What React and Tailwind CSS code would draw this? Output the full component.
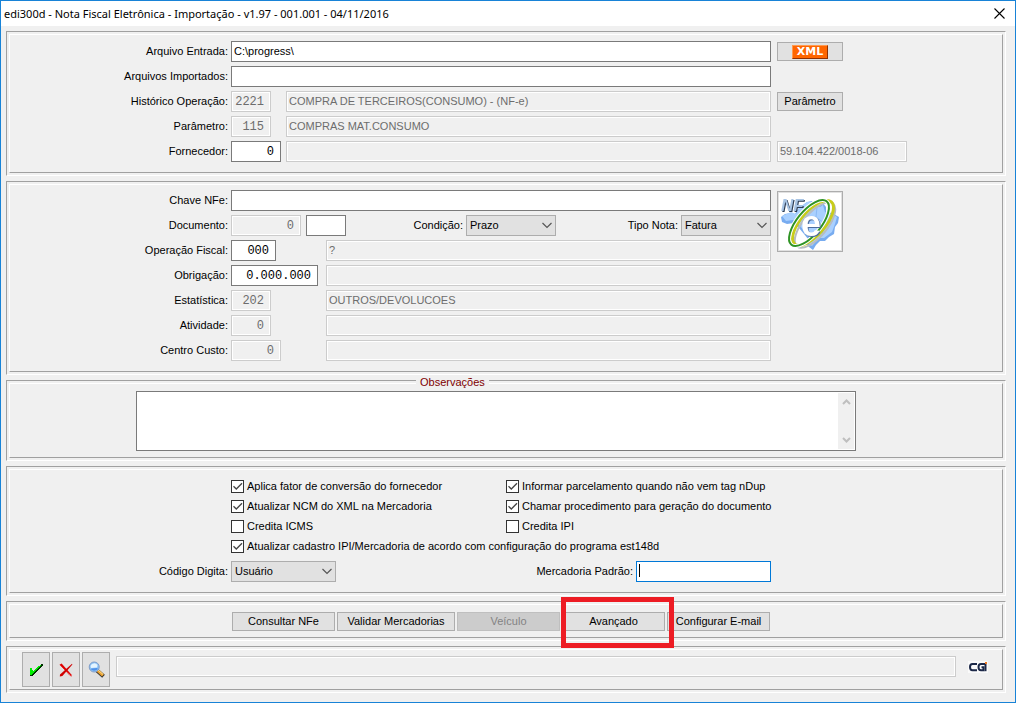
import { useState } from 'react';
import clsx from 'clsx';

// ── Small building blocks ────────────────────────────────────────────────────

// Double bevelled group frame: sunken line outside, raised line inside
function Panel({ className, children }) {
  return (
    <section className="relative border border-t-[#a0a0a0] border-l-[#a0a0a0] border-r-white border-b-white p-[2px]">
      <div className={clsx('border border-t-white border-l-white border-r-[#a0a0a0] border-b-[#a0a0a0]', className)}>
        {children}
      </div>
    </section>
  );
}

function Field({ mono, right, className, disabled, ...props }) {
  return (
    <input
      type="text"
      disabled={disabled}
      className={clsx(
        'h-[21px] min-w-0 border px-[2px] outline-none',
        mono ? 'font-["Liberation_Mono",monospace] text-[12px]' : 'pb-[1px]',
        right && 'pr-[6px] text-right',
        disabled
          ? 'border-[#cccccc] bg-[#f0f0f0] text-[#6d6d6d] shadow-[inset_0_0_0_1px_#ffffff]'
          : 'border-[#7a7a7a] bg-white text-black focus:border-[#0078d7]',
        className,
      )}
      {...props}
    />
  );
}

function Select({ id, className, options }) {
  return (
    <div className={clsx('relative', className)}>
      <select id={id} className="h-[21px] w-full appearance-none border border-[#adadad] bg-[#e1e1e1] px-[3px] text-black outline-none">
        {options.map((o) => <option key={o}>{o}</option>)}
      </select>
      <svg className="pointer-events-none absolute top-[7px] right-[4px] h-[7px] w-[10px]" viewBox="0 0 10 7" fill="none" stroke="#555555" strokeWidth="1.2">
        <path d="M0.5 1 L5 5.5 L9.5 1" />
      </svg>
    </div>
  );
}

function Row({ id, label, children }) {
  return (
    <div className="flex h-[21px] items-center">
      <label htmlFor={id} className="w-[221px] shrink-0 pr-[3px] text-right">{label}</label>
      <div className="flex min-w-0 flex-1">{children}</div>
    </div>
  );
}

function Check({ id, label, defaultChecked, className }) {
  const [checked, setChecked] = useState(!!defaultChecked);
  return (
    <div className={clsx('flex h-[20px] items-center', className)}>
      <span className="relative block size-[13px] shrink-0">
        <input
          id={id}
          type="checkbox"
          checked={checked}
          onChange={(e) => setChecked(e.target.checked)}
          className="block size-[13px] appearance-none border border-[#333333] bg-white"
        />
        {checked && (
          <svg className="pointer-events-none absolute inset-0 size-[13px]" viewBox="0 0 13 13" fill="none" stroke="#444444" strokeWidth="1.3">
            <path d="M2.5 6.2 L5.3 9 L11 3.2" />
          </svg>
        )}
      </span>
      <label htmlFor={id} className="pl-[3px] whitespace-nowrap">{label}</label>
    </div>
  );
}

function Button({ className, children, ...props }) {
  return (
    <button
      type="button"
      className={clsx(
        'flex items-center justify-center border border-[#adadad] bg-[#e1e1e1] whitespace-nowrap text-black disabled:border-[#bfbfbf] disabled:bg-[#cccccc] disabled:text-[#838383]',
        className,
      )}
      {...props}
    >
      {children}
    </button>
  );
}

// ── Icons ────────────────────────────────────────────────────────────────────

function ConfirmIcon() {
  return (
    <svg className="h-[14px] w-[14px]" viewBox="0 0 14 14" shapeRendering="crispEdges">
      <path d="M0.5 6 L3 6 L4 9 L12 1.5 L14 1 L14 2 L4.5 12.5 L1 13 L0.5 12 Z" fill="#003000" />
      <path d="M1 5 L3 5 L4 8.5 L10 3 L13.5 1 L4 11 L1.5 12 Z" fill="#00f000" />
    </svg>
  );
}

function CancelIcon() {
  return (
    <svg className="h-[14px] w-[14px]" viewBox="0 0 14 14" fill="none">
      <path d="M2 2.5 L11 12.5 L13 13" stroke="#f04040" strokeWidth="1" />
      <path d="M0.5 1.8 L2.6 0.6 L12.8 12 L11.8 12.5 Z" fill="#e00000" />
      <path d="M13 0.8 L13.4 1.6 L3.4 13 L0.8 13.4 L1 11.6 Z" fill="#d00000" />
    </svg>
  );
}

function SearchIcon() {
  return (
    <svg className="h-[17px] w-[17px]" viewBox="0 0 17 17" fill="none">
      <path d="M9 9.5 L15.5 15.2" stroke="#303030" strokeWidth="4" />
      <path d="M9 9 L15 14.4" stroke="#e8a030" strokeWidth="3" />
      <path d="M9.5 8.5 L15 13.4" stroke="#ffe090" strokeWidth="1" />
      <circle cx="6.2" cy="6" r="5" fill="#8cc4f8" stroke="#7f9cc8" strokeWidth="1" />
      <path d="M2.5 5 A4 4 0 0 1 9.5 4 L9 6.5 L3 7 Z" fill="#e4f4ff" />
      <path d="M2.5 8 Q6 11.5 10 8 L9 7 L4 7.5 Z" fill="#4f90e8" />
    </svg>
  );
}

function NfeLogo() {
  return (
    <svg className="h-[57px] w-[62px]" viewBox="0 0 62 57" fill="none">
      <rect width="62" height="57" fill="#ffffff" />
      <path
        d="M2 24 L6 21 L12 20 L16 21 L19 16 L24 12 L28 9 L33 8 L36 12 L40 13 L44 10 L47 14 L47 19 L53 20 L60 24 L59 30 L56 34 L55 41 L50 44 L46 48 L41 48 L37 52 L34 57 L30 54 L27 50 L29 46 L25 41 L20 35 L15 30 L8 31 L3 29 Z"
        fill="#78acf0"
      />
      <path
        d="M3 23 L12 19 L17 21 L20 15 L28 9 L33 9 L36 13 L41 14 L44 12 L46 19 L53 21 L58 24 L56 31 L53 39 L45 45 L40 45 L33 53 L29 50 L31 45 L26 39 L21 33 L14 27 L7 28 Z"
        fill="#a9d0ff"
      />
      <path d="M38 14 L37 24 L45 30 L54 28 M37 24 L26 26 M45 30 L43 43 M33 40 L43 43" stroke="#8bbaf5" strokeWidth="1" />
      {/* shadow, yellow and green rings */}
      <ellipse cx="36" cy="32" rx="12" ry="28" transform="rotate(40 36 32)" stroke="#b8bcc0" strokeWidth="2" />
      <ellipse cx="34" cy="30" rx="12" ry="28" transform="rotate(41 34 30)" stroke="#c8cc1c" strokeWidth="3" />
      <text
        x="2" y="18" fontFamily="Liberation Sans, sans-serif" fontSize="17" fontWeight="bold" fontStyle="italic" fill="#a8c4e4"
        className="drop-shadow-[1px_1px_0px_#2c3c54]"
      >
        NF
      </text>
      <ellipse cx="30" cy="30" rx="12" ry="28" transform="rotate(39 30 30)" stroke="#ffffff" strokeWidth="4" />
      <ellipse cx="30" cy="30" rx="12" ry="28" transform="rotate(39 30 30)" stroke="#2f9424" strokeWidth="2" />
      <text
        x="22" y="43" fontFamily="Liberation Sans, sans-serif" fontSize="36" fontWeight="bold" fill="#ffffff"
        className="drop-shadow-[1px_1px_0px_#4c6c9c]"
      >
        e
      </text>
    </svg>
  );
}

function CgiLogo() {
  return (
    <svg className="h-[12px] w-[20px]" viewBox="0 0 20 12" fill="none">
      <rect width="20" height="12" fill="#fafafa" />
      <path d="M9 3 H4.5 Q2 3 2 6 Q2 9.2 4.5 9.2 H9" stroke="#1c2848" strokeWidth="2" />
      <path d="M17 3 H13 Q10.5 3 10.5 6 Q10.5 9.2 13 9.2 H15.5 V6.3 H13.5" stroke="#1c2848" strokeWidth="2" />
      <path d="M17.5 3 V10.2" stroke="#1c2848" strokeWidth="2" />
      <rect x="17" y="1" width="2" height="2" fill="#f07820" />
    </svg>
  );
}

// ── Window ───────────────────────────────────────────────────────────────────

export default function App() {
  return (
    <div className="bg-white pr-px">
      <main className='border border-[#1883d7] bg-[#f0f0f0] font-["Liberation_Sans",sans-serif] text-[11px] leading-[15px] text-black'>

        {/* Title bar */}
        <header className="flex h-[25px] items-center justify-between bg-white pr-[10px] pl-[3px]">
          <h1 className='font-["Noto_Sans",sans-serif] text-[11px]'>
            edi300d - Nota Fiscal Eletrônica - Importação - v1.97 - 001.001 - 04/11/2016
          </h1>
          <button type="button" aria-label="Fechar">
            <svg className="size-[11px]" viewBox="0 0 11 11" stroke="#000000" strokeWidth="1.1">
              <path d="M0.5 0.5 L10.5 10.5 M10.5 0.5 L0.5 10.5" />
            </svg>
          </button>
        </header>

        <div className="flex flex-col gap-[5px] px-[5px] pt-[5px] pb-[9px] pr-[9px]">

          {/* Source files */}
          <Panel className="flex pt-[6px] pb-[10px]">
            <div className="flex flex-1 flex-col gap-1">
              <Row id="entrada" label="Arquivo Entrada:">
                <Field id="entrada" defaultValue="C:\progress\" className="flex-1" />
              </Row>
              <Row id="importados" label="Arquivos Importados:">
                <Field id="importados" className="flex-1" />
              </Row>
              <Row id="historico" label="Histórico Operação:">
                <Field id="historico" mono right disabled defaultValue="2221" className="w-[40px]" />
                <Field aria-label="Descrição do histórico" disabled defaultValue="COMPRA DE TERCEIROS(CONSUMO) - (NF-e)" className="ml-[15px] flex-1" />
              </Row>
              <Row id="parametro" label="Parâmetro:">
                <Field id="parametro" mono right disabled defaultValue="115" className="w-[40px]" />
                <Field aria-label="Descrição do parâmetro" disabled defaultValue="COMPRAS MAT.CONSUMO" className="ml-[15px] flex-1" />
              </Row>
              <Row id="fornecedor" label="Fornecedor:">
                <Field id="fornecedor" mono right defaultValue="0" className="w-[50px]" />
                <Field aria-label="Nome do fornecedor" disabled className="ml-[5px] flex-1" />
              </Row>
            </div>
            <div className="flex w-[231px] flex-col gap-1 pl-[6px]">
              <div className="flex h-[21px] items-center">
                <Button className="h-[19px] w-[66px]">
                  <span className='flex h-[14px] w-[36px] items-center justify-center border border-t-[#ff9a50] border-l-[#ff9a50] border-r-[#903000] border-b-[#903000] bg-[#ff6600] font-["DejaVu_Sans",sans-serif] text-[11px] font-bold text-white'>
                    XML
                  </span>
                </Button>
              </div>
              <div className="h-[21px]" />
              <div className="flex h-[21px] items-center">
                <Button className="h-[19px] w-[66px]">Parâmetro</Button>
              </div>
              <div className="h-[21px]" />
              <Field aria-label="CNPJ" disabled defaultValue="59.104.422/0018-06" className="w-[130px]" />
            </div>
          </Panel>

          {/* Invoice data */}
          <Panel className="flex pt-[5px] pb-[10px]">
            <div className="flex flex-1 flex-col gap-1">
              <Row id="chave" label="Chave NFe:">
                <Field id="chave" className="flex-1" />
              </Row>
              <Row id="documento" label="Documento:">
                <Field id="documento" mono right disabled defaultValue="0" className="w-[70px]" />
                <Field aria-label="Série" className="ml-[5px] w-[40px]" />
                <div className="flex flex-1 items-center justify-end">
                  <label htmlFor="condicao" className="pr-[3px]">Condição:</label>
                  <Select id="condicao" className="w-[90px]" options={['Prazo', 'Vista']} />
                </div>
                <div className="flex w-[215px] items-center justify-end">
                  <label htmlFor="tipo" className="pr-[3px]">Tipo Nota:</label>
                  <Select id="tipo" className="w-[90px]" options={['Fatura', 'Remessa']} />
                </div>
              </Row>
              <Row id="operacao" label="Operação Fiscal:">
                <Field id="operacao" mono right defaultValue="000" className="w-[45px]" />
                <Field aria-label="Descrição da operação" disabled defaultValue="?" className="ml-[50px] flex-1" />
              </Row>
              <Row id="obrigacao" label="Obrigação:">
                <Field id="obrigacao" mono right defaultValue="0.000.000" className="w-[87px]" />
                <Field aria-label="Descrição da obrigação" disabled className="ml-[8px] flex-1" />
              </Row>
              <Row id="estatistica" label="Estatística:">
                <Field id="estatistica" mono right disabled defaultValue="202" className="w-[40px]" />
                <Field aria-label="Descrição da estatística" disabled defaultValue="OUTROS/DEVOLUCOES" className="ml-[55px] flex-1" />
              </Row>
              <Row id="atividade" label="Atividade:">
                <Field id="atividade" mono right disabled defaultValue="0" className="w-[40px]" />
                <Field aria-label="Descrição da atividade" disabled className="ml-[55px] flex-1" />
              </Row>
              <Row id="custo" label="Centro Custo:">
                <Field id="custo" mono right disabled defaultValue="0" className="w-[50px]" />
                <Field aria-label="Descrição do centro de custo" disabled className="ml-[45px] flex-1" />
              </Row>
            </div>
            <div className="w-[231px] pt-px pl-[6px]">
              <Button aria-label="NF-e" className="h-[61px] w-[66px]">
                <NfeLogo />
              </Button>
            </div>
          </Panel>

          {/* Notes */}
          <Panel className="pt-[7px] pr-[146px] pb-[6px] pl-[126px]">
            <label htmlFor="obs" className="absolute -top-[6px] left-[409px] bg-[#f0f0f0] px-[4px] text-[#800000]">
              Observações
            </label>
            <div className="flex h-[60px] border border-[#7a7a7a] bg-white">
              <textarea id="obs" className="h-full flex-1 resize-none px-[2px] outline-none" />
              <div className="m-px flex w-[16px] flex-col items-center justify-between bg-[#f0f0f0] py-[6px]">
                <svg className="h-[6px] w-[9px]" viewBox="0 0 9 6" fill="none" stroke="#bfbfbf" strokeWidth="2">
                  <path d="M1 5 L4.5 1.5 L8 5" />
                </svg>
                <svg className="h-[6px] w-[9px]" viewBox="0 0 9 6" fill="none" stroke="#bfbfbf" strokeWidth="2">
                  <path d="M1 1 L4.5 4.5 L8 1" />
                </svg>
              </div>
            </div>
          </Panel>

          {/* Options */}
          <Panel className="pt-[6px] pr-[231px] pb-[10px]">
            <div className="grid grid-cols-[275px_1fr] pl-[221px]">
              <Check id="fator" label="Aplica fator de conversão do fornecedor" defaultChecked />
              <Check id="parcelamento" label="Informar parcelamento quando não vem tag nDup" defaultChecked />
              <Check id="ncm" label="Atualizar NCM do XML na Mercadoria" defaultChecked />
              <Check id="procedimento" label="Chamar procedimento para geração do documento" defaultChecked />
              <Check id="icms" label="Credita ICMS" />
              <Check id="ipi" label="Credita IPI" />
              <Check
                id="cadastro"
                label="Atualizar cadastro IPI/Mercadoria de acordo com configuração do programa est148d"
                defaultChecked
                className="col-span-2"
              />
            </div>
            <div className="mt-[5px]">
              <Row id="digita" label="Código Digita:">
                <Select id="digita" className="w-[105px]" options={['Usuário', 'Fornecedor']} />
                <div className="flex flex-1 items-center justify-end">
                  <label htmlFor="padrao" className="pr-[3px]">Mercadoria Padrão:</label>
                  <div className="relative flex w-[135px]">
                    <Field id="padrao" className="flex-1 border-[#0078d7]!" />
                    <span className="absolute top-[3px] left-[3px] h-[13px] w-px bg-black" />
                  </div>
                </div>
              </Row>
            </div>
          </Panel>

          {/* Actions */}
          <Panel className="flex gap-[2px] pt-[7px] pb-[6px] pl-[222px]">
            <Button className="h-[19px] w-[103px]">Consultar NFe</Button>
            <Button className="h-[19px] w-[118px]">Validar Mercadorias</Button>
            <Button className="h-[19px] w-[103px]" disabled>Veículo</Button>
            <div className="relative">
              <Button className="h-[19px] w-[103px]">Avançado</Button>
              <span className="pointer-events-none absolute -top-[15px] -left-[1px] z-10 h-[51px] w-[113px] border-5 border-[#ed1c24]" />
            </div>
            <Button className="h-[19px] w-[103px]">Configurar E-mail</Button>
          </Panel>

          {/* Footer */}
          <Panel className="flex items-start gap-[2px] pt-[2px] pr-[14px] pb-[2px] pl-[12px]">
            <Button aria-label="Confirmar" className="h-[35px] w-[28px]"><ConfirmIcon /></Button>
            <Button aria-label="Cancelar" className="h-[35px] w-[28px]"><CancelIcon /></Button>
            <Button aria-label="Pesquisar" className="h-[35px] w-[28px]"><SearchIcon /></Button>
            <div className="flex h-[29px] flex-1 items-center gap-[12px] pl-1">
              <Field aria-label="Mensagem" disabled className="flex-1" />
              <CgiLogo />
            </div>
          </Panel>
        </div>
      </main>
    </div>
  );
}
